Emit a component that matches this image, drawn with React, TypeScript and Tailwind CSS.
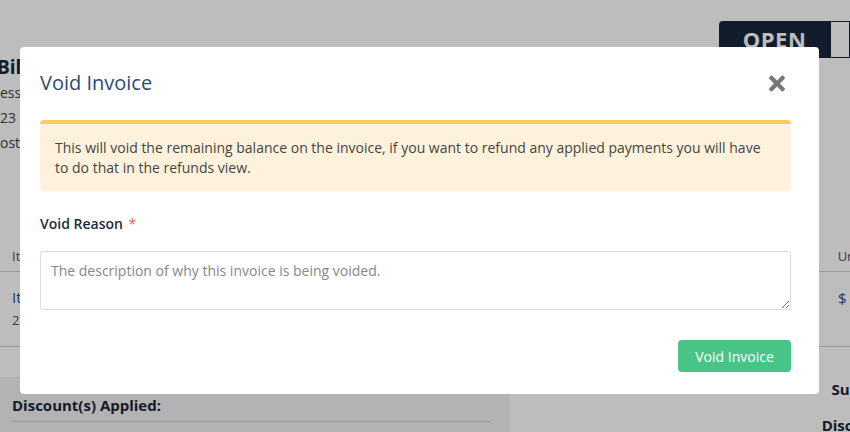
import React from "react";
import { FaTimes } from "react-icons/fa";

export default function App() {
  return (
    <div
      className="relative w-[850px] h-[432px] overflow-hidden bg-white text-[#333]"
      style={{ fontFamily: "'Open Sans', 'Noto Sans', sans-serif" }}
    >
      {/* Underlying page */}
      <div className="flex flex-col">
        <div className="flex justify-end pt-[21px]">
          <div className="flex h-[37px]">
            <div className="w-[111px] bg-[#17263d] rounded-tl-[4px] flex items-center justify-center text-white text-[22px] font-bold tracking-wide">
              OPEN
            </div>
            <div className="w-[20px] border border-[#17263d] bg-white"></div>
          </div>
        </div>
        <div className="-mt-[4px] -ml-[3px] text-[19px] font-bold text-[#1b2638] leading-[26px]">Billing</div>
        <div className="text-[14px] leading-[25px] text-[#444]">
          <div>ess</div>
          <div>23</div>
          <div>ost</div>
        </div>
        <div className="mt-[87px] flex justify-between px-[12px] text-[13px] text-[#555] h-[30px] items-center border-b border-[#ccc]">
          <span>Item</span>
          <span className="mr-[-25px]">Unit</span>
        </div>
        <div className="flex justify-between px-[12px] h-[75px] items-center border-b border-[#ccc]">
          <div className="flex flex-col leading-[23px]">
            <span className="text-[15px] text-[#2d4a73]">Item</span>
            <span className="text-[13px] text-[#555]">2</span>
          </div>
          <span className="mr-[-21px] text-[15px] text-[#2d4a73] -mt-[22px]">$ 1</span>
        </div>
        <div className="mt-[30px] flex">
          <div className="w-[510px] h-[60px] bg-[#f2f2f2] px-[12px] pt-[17px]">
            <div className="text-[15px] font-bold text-[#1b2638] pb-[4px] border-b border-[#ccc] w-[478px]">
              Discount(s) Applied:
            </div>
          </div>
          <div className="flex-1 flex flex-col items-end text-[15px] font-bold text-[#1b2638] leading-[36px] -mt-[6px]">
            <span className="mr-[-45px]">Subtotal</span>
            <span className="mr-[-38px]">Discount</span>
          </div>
        </div>
      </div>

      {/* Overlay */}
      <div className="absolute inset-0 bg-black/[0.26]"></div>

      {/* Modal */}
      <div className="absolute left-[20px] top-[47px] w-[799px] h-[347px] bg-white rounded-[4px] pl-[20px] pr-[28px] pt-[22px] flex flex-col">
        <div className="flex items-center justify-between h-[28px]">
          <h2 className="text-[20px] text-[#2d4a73] font-normal">Void Invoice</h2>
          <FaTimes className="text-[#777] w-[16px] h-[23px] mr-[6px]" />
        </div>
        <div className="mt-[23px] bg-[#fef2dc] border-t-[4px] border-[#fccb57] rounded-[4px] pl-[15px] pr-[15px] pt-[14px] pb-[13px] text-[14px] leading-[20px] text-[#444]">
          This will void the remaining balance on the invoice, if you want to refund any applied payments you will have to do that in the refunds view.
        </div>
        <div className="mt-[23px] text-[14px] font-semibold text-[#1e2b3c] leading-[20px]">
          Void Reason <span className="text-[#f05a5a] font-normal ml-[2px]">*</span>
        </div>
        <textarea
          className="mt-[17px] h-[59px] w-full border border-[#dcdcdc] rounded-[3px] px-[10px] py-[9px] text-[14px] leading-[20px] placeholder:text-[#888] outline-none"
          placeholder="The description of why this invoice is being voided."
        ></textarea>
        <div className="flex justify-end mt-[30px]">
          <button className="w-[113px] h-[32px] bg-[#48c586] text-white text-[14px] font-medium rounded-[4px]">
            Void Invoice
          </button>
        </div>
      </div>
    </div>
  );
}
